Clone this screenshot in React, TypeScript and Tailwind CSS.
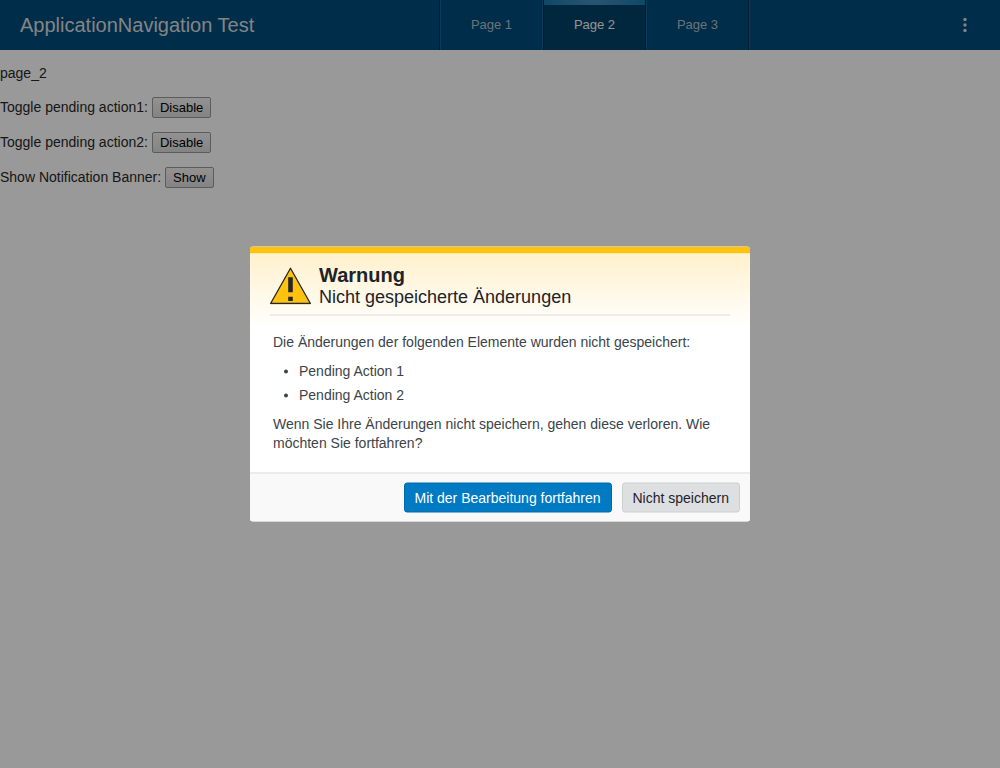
const tabs = [
  { name: "Page 1", active: false, edges: "border-l-[#0f6594] border-r-[#0f6594]" },
  { name: "Page 2", active: true, edges: "border-l-[#002f4d] border-r-[#002f4d]" },
  { name: "Page 3", active: false, edges: "border-l-[#0f6594] border-r-[#002f4d]" },
];
const pending = ["Pending Action 1", "Pending Action 2"];
const toggles = [
  { label: "Toggle pending action1:", action: "Disable" },
  { label: "Toggle pending action2:", action: "Disable" },
  { label: "Show Notification Banner:", action: "Show" },
];

function Header() {
  return (
    <header className="flex h-[50px] items-stretch bg-[#004b7b]">
      <h1 className="flex w-[44%] items-center border-r border-[#002f4d] pl-5 text-[20px] text-[#dcdcdc]">
        ApplicationNavigation Test
      </h1>
      <nav className="flex">
        {tabs.map((tab) => (
          <a
            key={tab.name}
            href="#"
            aria-current={tab.active ? "page" : undefined}
            className={
              "flex w-[103px] flex-col border-x text-[13px] " +
              tab.edges +
              (tab.active ? " bg-[#004168] text-[#f5f5f5]" : " text-[#b4c0c8]")
            }
          >
            <span
              className={
                "h-[5px] w-full " +
                (tab.active ? "bg-linear-to-r from-[#1b79ab] via-[#3f8fbd] to-[#1b79ab]" : "")
              }
            />
            <span className="flex flex-1 items-center justify-center pb-[5px]">{tab.name}</span>
          </a>
        ))}
      </nav>
      <div className="flex flex-1 items-center justify-end border-l border-[#0f6594] pr-[25px]">
        <button aria-label="Menu" className="flex h-5 w-5 items-center justify-center">
          <svg width="4" height="16" viewBox="0 0 4 16" fill="#dcdcdc">
            <circle cx="2" cy="2.5" r="1.7" />
            <circle cx="2" cy="8" r="1.7" />
            <circle cx="2" cy="13.5" r="1.7" />
          </svg>
        </button>
      </div>
    </header>
  );
}

function WarningIcon() {
  return (
    <svg width="42" height="38" viewBox="0 0 42 38" aria-hidden="true">
      <path d="M20.5 1.8 L40.4 37 H0.6 Z" fill="#ffc20e" stroke="#262626" strokeWidth="1.3" strokeLinejoin="round" />
      <path d="M18.2 10.7 h4.6 v15 h-4.6 Z M18.2 30.3 h4.6 v4.3 h-4.6 Z" fill="#262626" />
    </svg>
  );
}

function Dialog() {
  return (
    <section
      role="dialog"
      aria-modal="true"
      aria-labelledby="dialog-title"
      className="absolute top-1/2 left-1/2 w-[500px] max-w-full -translate-x-1/2 -translate-y-1/2 overflow-hidden rounded-[3px] bg-white text-[14px]"
    >
      <div className="h-[7px] bg-[#ffc20e]" />
      <div className="bg-linear-to-b from-[#fff1cc] to-white to-[75px] pb-5">
        <div className="mx-5 flex border-b border-[#dadcdd] pt-[10px] pb-[7px] text-[#1e2328]">
          <div className="mr-[7px] pt-[3px]">
            <WarningIcon />
          </div>
          <div>
            <h2 id="dialog-title" className="text-[20px] leading-[22px] font-bold">
              Warnung
            </h2>
            <h3 className="text-[18px] leading-[22px]">Nicht gespeicherte Änderungen</h3>
          </div>
        </div>
        <div className="px-[23px] pt-[17px] leading-[19px] text-[#3b4449]">
          <p>Die Änderungen der folgenden Elemente wurden nicht gespeichert:</p>
          <ul className="my-[10px] list-disc space-y-[5px] pl-[26px]">
            {pending.map((item) => (
              <li key={item}>{item}</li>
            ))}
          </ul>
          <p>Wenn Sie Ihre Änderungen nicht speichern, gehen diese verloren. Wie möchten Sie fortfahren?</p>
        </div>
      </div>
      <footer className="flex justify-end gap-[10px] border-t border-[#dadcdd] bg-[#f9f9f9] px-[10px] py-[9px]">
        <button className="h-[30px] rounded-[3px] border border-[#006aab] bg-[#007ac3] px-[10px] text-white">
          Mit der Bearbeitung fortfahren
        </button>
        <button className="h-[30px] rounded-[3px] border border-[#cdced0] bg-[#dedfe1] px-[10px] text-[#1e2328]">
          Nicht speichern
        </button>
      </footer>
    </section>
  );
}

export default function App() {
  return (
    <div className="min-h-screen bg-white font-['Liberation_Sans',Arial,sans-serif]">
      <Header />
      <main className="pt-[13px] text-[14px] leading-[21px] text-[#282828]">
        <p>page_2</p>
        <div className="mt-[13px] flex flex-col gap-[14px]">
          {toggles.map((row) => (
            <p key={row.label} className="flex items-center gap-1">
              {row.label}
              <button className="h-[21px] rounded-[2px] border border-[#9a9a9a] bg-linear-to-b from-[#f4f4f4] to-[#dcdcdc] px-[7px] text-[13px] leading-[19px] text-black">
                {row.action}
              </button>
            </p>
          ))}
        </div>
      </main>
      <div className="fixed inset-0 bg-black/40" />
      <div className="fixed inset-0">
        <Dialog />
      </div>
    </div>
  );
}
